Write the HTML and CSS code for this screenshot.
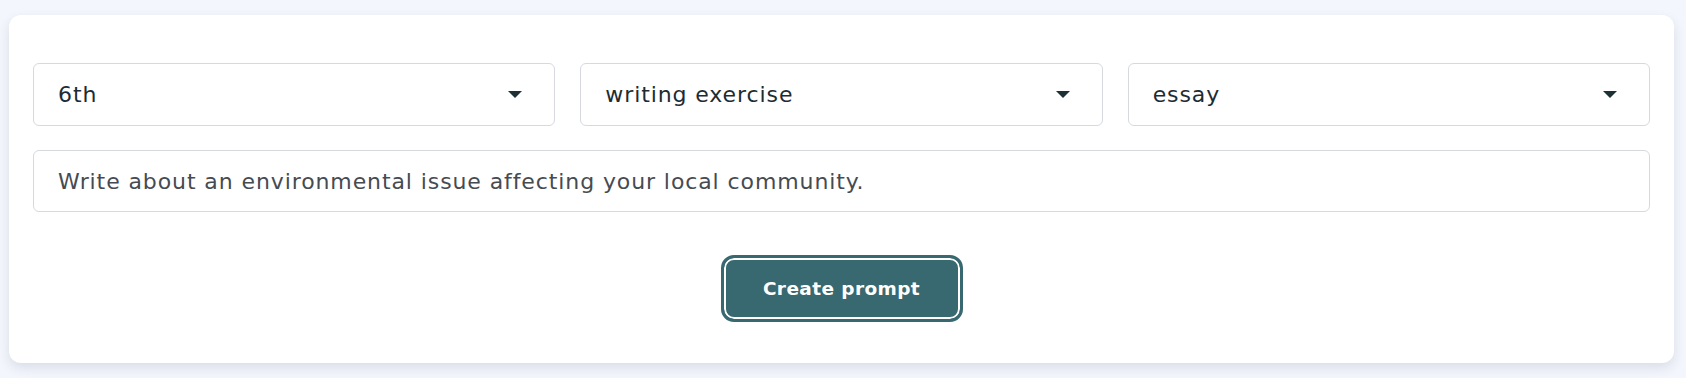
FILE: index.html
```html
<!DOCTYPE html>
<html lang="en">
<head>
    <meta charset="UTF-8">
    <meta name="viewport" content="width=device-width, initial-scale=1.0">
    <title>Writing Prompt Generator</title>
    <link rel="stylesheet" href="styles.css">
</head>
<body>

<div class="page">
    <div class="card">
        <div class="select-row">
            <div class="select-wrap">
                <select id="grade">
                    <option>6th</option>
                    <option>7th</option>
                    <option>8th</option>
                </select>
            </div>
            <div class="select-wrap">
                <select id="kind">
                    <option>writing exercise</option>
                    <option>reading exercise</option>
                </select>
            </div>
            <div class="select-wrap">
                <select id="format">
                    <option>essay</option>
                    <option>story</option>
                    <option>poem</option>
                </select>
            </div>
        </div>

        <input type="text" class="topic" id="topic" value="Write about an environmental issue affecting your local community.">

        <div class="actions">
            <button class="button">Create prompt</button>
        </div>
    </div>
</div>

</body>
</html>
```

FILE: styles.css
```css
body {
    margin: 0;
    background-color: #f3f6fc;
    font-family: "DejaVu Sans", Arial, sans-serif;
}
.page {
    padding: 15px 12px 15px 9px;
}
.card {
    background-color: #fff;
    border-radius: 12px;
    padding: 48px 24px 41px;
    box-shadow: 0px 5px 12px rgba(40, 50, 80, 0.12);
}
.select-row {
    display: grid;
    grid-template-columns: 1fr 1fr 1fr;
    gap: 25px;
    margin-bottom: 24px;
}
.select-wrap {
    position: relative;
}
.select-wrap::after {
    content: "";
    position: absolute;
    right: 33px;
    top: 28px;
    border-left: 7px solid transparent;
    border-right: 7px solid transparent;
    border-top: 7px solid #1d3036;
    pointer-events: none;
}
select, .topic {
    display: block;
    width: 100%;
    box-sizing: border-box;
    border: 1px solid #d6d9de;
    border-radius: 6px;
    background-color: #fff;
    font-family: inherit;
    font-size: 22px;
    letter-spacing: 0.9px;
    padding: 0 24px;
    outline: none;
}
select {
    height: 63px;
    color: #1d2c31;
    -webkit-appearance: none;
    appearance: none;
}
.topic {
    height: 62px;
    color: #464b52;
}
.actions {
    display: flex;
    justify-content: center;
    margin-top: 43px;
}
.button {
    width: 242px;
    height: 67px;
    background-color: #386870;
    color: #fff;
    border: 3px solid #386870;
    border-radius: 13px;
    box-shadow: inset 0 0 0 2px #fff;
    font-family: inherit;
    font-size: 18.5px;
    letter-spacing: 0.4px;
    font-weight: bold;
    cursor: pointer;
}
```
